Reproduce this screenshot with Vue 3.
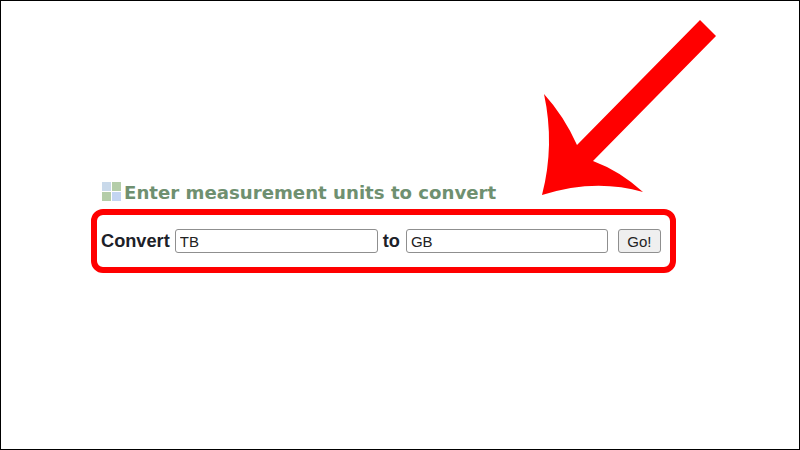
<script setup>
const fromUnit = 'TB'
const toUnit = 'GB'
</script>

<template>
  <div class="frame">
    <svg class="arrow" width="800" height="450" viewBox="0 0 800 450">
      <path d="M700 20 L716 36 L593 161 Q620 171 643 192 Q595 178 542 195 Q555 145 544 94 Q564 116 577 145 Z" fill="#ff0000" />
    </svg>
    <div class="content">
      <h2 class="heading">
        <svg class="grid-icon" width="19" height="19" viewBox="0 0 19 19">
          <rect x="0" y="0" width="9" height="9" fill="#c9d9ea" />
          <rect x="10" y="0" width="9" height="9" fill="#b4cda9" />
          <rect x="0" y="10" width="9" height="9" fill="#b4cda9" />
          <rect x="10" y="10" width="9" height="9" fill="#c3d5f2" />
        </svg>
        <span>Enter measurement units to convert</span>
      </h2>
      <form class="form" @submit.prevent>
        <label class="label" for="from">Convert</label>
        <input id="from" class="field" :value="fromUnit" />
        <label class="label to" for="to">to</label>
        <input id="to" class="field second" :value="toUnit" />
        <button class="go" type="submit">Go!</button>
      </form>
    </div>
  </div>
</template>

<style scoped>
.frame {
  position: relative;
  box-sizing: border-box;
  width: 800px;
  height: 450px;
  border: 1px solid #000;
  background: #fff;
  overflow: hidden;
  padding: 180px 0 0 90px;
}
.arrow {
  position: absolute;
  left: -1px;
  top: -1px;
}
.content {
  width: 585px;
}
.heading {
  display: flex;
  align-items: center;
  gap: 3px;
  margin: 0 0 0 11px;
  height: 24px;
  font-family: "DejaVu Sans", sans-serif;
  font-weight: 700;
  font-size: 18.15px;
  line-height: 24px;
  color: #6f9070;
  white-space: nowrap;
}
.grid-icon {
  flex: none;
  margin-top: -3px;
}
.form {
  box-sizing: border-box;
  display: flex;
  align-items: center;
  height: 64px;
  margin: 4px 0 0;
  padding: 0 0 0 4px;
  border: 6px solid #ff0000;
  border-radius: 12px;
}
.label {
  font-family: "Liberation Sans", Arial, sans-serif;
  font-weight: 700;
  font-size: 18.2px;
  color: #1c2128;
}
.to {
  margin: 0 6px 0 5px;
}
.field {
  box-sizing: border-box;
  flex: none;
  width: 203px;
  height: 24px;
  margin: 0 0 0 5px;
  padding: 0 5px 0 4px;
  border: 1px solid #8f8f8f;
  border-radius: 3px;
  background: #fff;
  font-family: "Liberation Sans", Arial, sans-serif;
  font-size: 15px;
  color: #222;
}
.second {
  width: 202px;
  margin-left: 0;
}
.go {
  box-sizing: border-box;
  flex: none;
  width: 43px;
  height: 24px;
  margin: 0 0 0 10px;
  padding: 0;
  border: 1px solid #8f8f8f;
  border-radius: 3px;
  background: #efefef;
  font-family: "Liberation Sans", Arial, sans-serif;
  font-size: 15px;
  color: #222;
}
</style>
